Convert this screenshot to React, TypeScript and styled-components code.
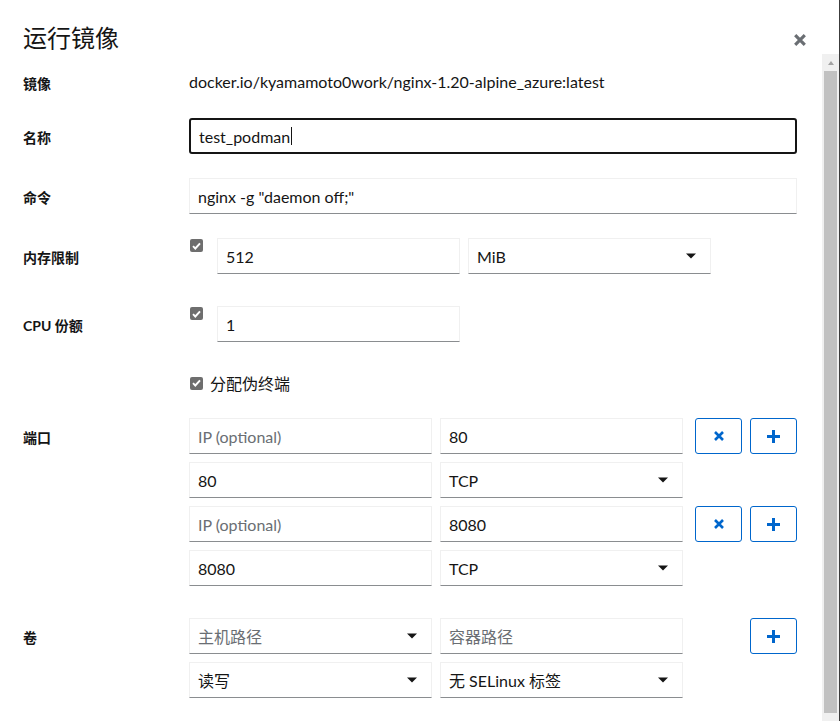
import React from "react";
import styled, { createGlobalStyle } from "styled-components";

const GlobalStyle = createGlobalStyle`
  html, body {
    margin: 0;
    padding: 0;
    background: #fff;
  }
  body {
    font-family: Lato, "Noto Sans CJK SC", sans-serif;
    color: #151515;
    overflow: hidden;
  }
  * {
    box-sizing: border-box;
  }
`;

const Modal = styled.div`
  width: 840px;
  height: 721px;
  display: flex;
  flex-direction: column;
  border-right: 1px solid #3c3c3c;
  background: #fff;
`;

const Header = styled.header`
  height: 54px;
  flex: none;
  display: flex;
  align-items: flex-start;
  justify-content: space-between;
  padding: 23px 33px 0 23px;
`;

const Title = styled.h1`
  margin: 0;
  font-size: 24px;
  font-weight: 400;
  line-height: 30px;
  color: #151515;
`;

const CloseButton = styled.button`
  border: 0;
  background: none;
  padding: 0;
  margin-top: 11px;
  width: 12px;
  height: 12px;
  display: flex;
  color: #6a6e73;
  cursor: pointer;
`;

const Main = styled.div`
  flex: 1;
  min-height: 0;
  display: flex;
`;

const Body = styled.div`
  flex: 1;
  overflow: hidden;
  padding: 10px 0 40px 23px;
`;

// the body's scrollbar as it shows in the screenshot
const ScrollRail = styled.div`
  width: 17px;
  flex: none;
  background: #f0f0f0;
  display: flex;
  flex-direction: column;
`;

const ScrollArrow = styled.div`
  height: 17px;
  flex: none;
  display: flex;
  justify-content: center;
  padding-top: 7px;
  &::before {
    content: "";
    width: 0;
    height: 0;
    border-left: 3.5px solid transparent;
    border-right: 3.5px solid transparent;
    border-bottom: 4px solid #a3a3a3;
  }
`;

const ScrollThumb = styled.div`
  flex: 1;
  margin: 0 2px 8px;
  background: #c1c1c1;
`;

const Row = styled.div<{ $top: number }>`
  display: grid;
  grid-template-columns: 166px 608px;
  margin-top: ${(p) => p.$top}px;
`;

const Label = styled.label`
  font-size: 14px;
  font-weight: 700;
  height: 36px;
  padding-top: 1px;
  display: flex;
  align-items: center;
`;

const Value = styled.div`
  font-size: 16px;
  line-height: 36px;
`;

const fieldBase = `
  height: 36px;
  font-family: Lato, "Noto Sans CJK SC", sans-serif;
  font-size: 16px;
  color: #151515;
  background: #fff;
  border: 1px solid #f0f0f0;
  border-bottom-color: #8a8d90;
  border-radius: 0;
  padding: 0 8px;
  outline: none;
`;

const TextInput = styled.input<{ $width?: number }>`
  ${fieldBase}
  width: ${(p) => (p.$width ? `${p.$width}px` : "100%")};
  &::placeholder {
    color: #6a6e73;
  }
`;

const FocusedField = styled.div`
  height: 36px;
  border: 2px solid #151515;
  border-radius: 3px;
  padding: 0 8px;
  display: flex;
  align-items: center;
  font-size: 16px;
`;

const Caret = styled.span`
  display: inline-block;
  width: 1px;
  height: 18px;
  background: #151515;
  margin-left: 1px;
`;

const Select = styled.div<{ $placeholder?: boolean }>`
  ${fieldBase}
  width: 100%;
  display: flex;
  align-items: center;
  justify-content: space-between;
  padding-right: 14px;
  color: ${(p) => (p.$placeholder ? "#6a6e73" : "#151515")};
`;

const CheckLine = styled.div`
  display: flex;
  align-items: flex-start;
`;

const CheckCell = styled.div`
  width: 28px;
  flex: none;
  padding: 1px 0 0 1px;
`;

const Box = styled.span`
  width: 13px;
  height: 13px;
  border-radius: 2px;
  background: #6e6e6e;
  display: flex;
  align-items: center;
  justify-content: center;
`;

const Pair = styled.div`
  display: grid;
  grid-template-columns: 243px 243px;
  column-gap: 8px;
`;

const CheckLabel = styled.label`
  display: flex;
  align-items: center;
  gap: 7px;
  height: 24px;
  padding-left: 1px;
  font-size: 16px;
`;

const Stack = styled.div`
  display: flex;
  flex-direction: column;
  gap: 8px;
`;

const Line = styled.div`
  display: grid;
  grid-template-columns: 243px 243px 1fr;
  column-gap: 8px;
`;

const Actions = styled.div`
  display: flex;
  justify-content: flex-end;
  gap: 8px;
`;

const IconButton = styled.button`
  width: 47px;
  height: 36px;
  border: 1px solid #06c;
  border-radius: 3px;
  background: #fff;
  color: #06c;
  padding: 0;
  display: flex;
  align-items: center;
  justify-content: center;
  cursor: pointer;
`;

const Check = () => (
  <Box>
    <svg width="9" height="8" viewBox="0 0 9 8">
      <path d="M1 4.2l2.3 2.3L8 1.3" stroke="#fff" strokeWidth="1.9" fill="none" />
    </svg>
  </Box>
);

const CaretDown = () => (
  <svg width="10" height="6" viewBox="0 0 10 6">
    <path d="M0 0.5h10L5 5.5z" fill="#151515" />
  </svg>
);

const TimesIcon = ({ size, stroke }: { size: number; stroke: number }) => (
  <svg width={size} height={size} viewBox="0 0 10 10">
    <path d="M1 1l8 8M9 1l-8 8" stroke="currentColor" strokeWidth={stroke} />
  </svg>
);

const PlusIcon = () => (
  <svg width="13" height="13" viewBox="0 0 13 13">
    <path d="M6.5 0v13M0 6.5h13" stroke="currentColor" strokeWidth="3" />
  </svg>
);

const ports = [
  { host: "80", container: "80" },
  { host: "8080", container: "8080" },
];

export default function App() {
  return (
    <>
      <GlobalStyle />
      <Modal>
        <Header>
          <Title>运行镜像</Title>
          <CloseButton aria-label="关闭">
            <TimesIcon size={12} stroke={2.6} />
          </CloseButton>
        </Header>
        <Main>
          <Body>
            <Row $top={0}>
              <Label>镜像</Label>
              <Value>docker.io/kyamamoto0work/nginx-1.20-alpine_azure:latest</Value>
            </Row>

            <Row $top={18}>
              <Label>名称</Label>
              <FocusedField>
                test_podman
                <Caret />
              </FocusedField>
            </Row>

            <Row $top={24}>
              <Label>命令</Label>
              <TextInput readOnly defaultValue={'nginx -g "daemon off;"'} />
            </Row>

            <Row $top={24}>
              <Label>内存限制</Label>
              <CheckLine>
                <CheckCell>
                  <Check />
                </CheckCell>
                <Pair>
                  <TextInput readOnly defaultValue="512" />
                  <Select>
                    MiB
                    <CaretDown />
                  </Select>
                </Pair>
              </CheckLine>
            </Row>

            <Row $top={32}>
              <Label>CPU 份额</Label>
              <CheckLine>
                <CheckCell>
                  <Check />
                </CheckCell>
                <TextInput readOnly defaultValue="1" $width={243} />
              </CheckLine>
            </Row>

            <Row $top={29}>
              <div />
              <CheckLabel>
                <Check />
                分配伪终端
              </CheckLabel>
            </Row>

            <Row $top={23}>
              <Label>端口</Label>
              <Stack>
                {ports.map((p) => (
                  <React.Fragment key={p.host}>
                    <Line>
                      <TextInput readOnly placeholder="IP (optional)" />
                      <TextInput readOnly defaultValue={p.host} />
                      <Actions>
                        <IconButton aria-label="删除">
                          <TimesIcon size={10} stroke={2.6} />
                        </IconButton>
                        <IconButton aria-label="添加">
                          <PlusIcon />
                        </IconButton>
                      </Actions>
                    </Line>
                    <Line>
                      <TextInput readOnly defaultValue={p.container} />
                      <Select>
                        TCP
                        <CaretDown />
                      </Select>
                    </Line>
                  </React.Fragment>
                ))}
              </Stack>
            </Row>

            <Row $top={32}>
              <Label>卷</Label>
              <Stack>
                <Line>
                  <Select $placeholder>
                    主机路径
                    <CaretDown />
                  </Select>
                  <TextInput readOnly placeholder="容器路径" />
                  <Actions>
                    <IconButton aria-label="添加">
                      <PlusIcon />
                    </IconButton>
                  </Actions>
                </Line>
                <Line>
                  <Select>
                    读写
                    <CaretDown />
                  </Select>
                  <Select>
                    无 SELinux 标签
                    <CaretDown />
                  </Select>
                </Line>
              </Stack>
            </Row>
          </Body>
          <ScrollRail>
            <ScrollArrow />
            <ScrollThumb />
          </ScrollRail>
        </Main>
      </Modal>
    </>
  );
}
